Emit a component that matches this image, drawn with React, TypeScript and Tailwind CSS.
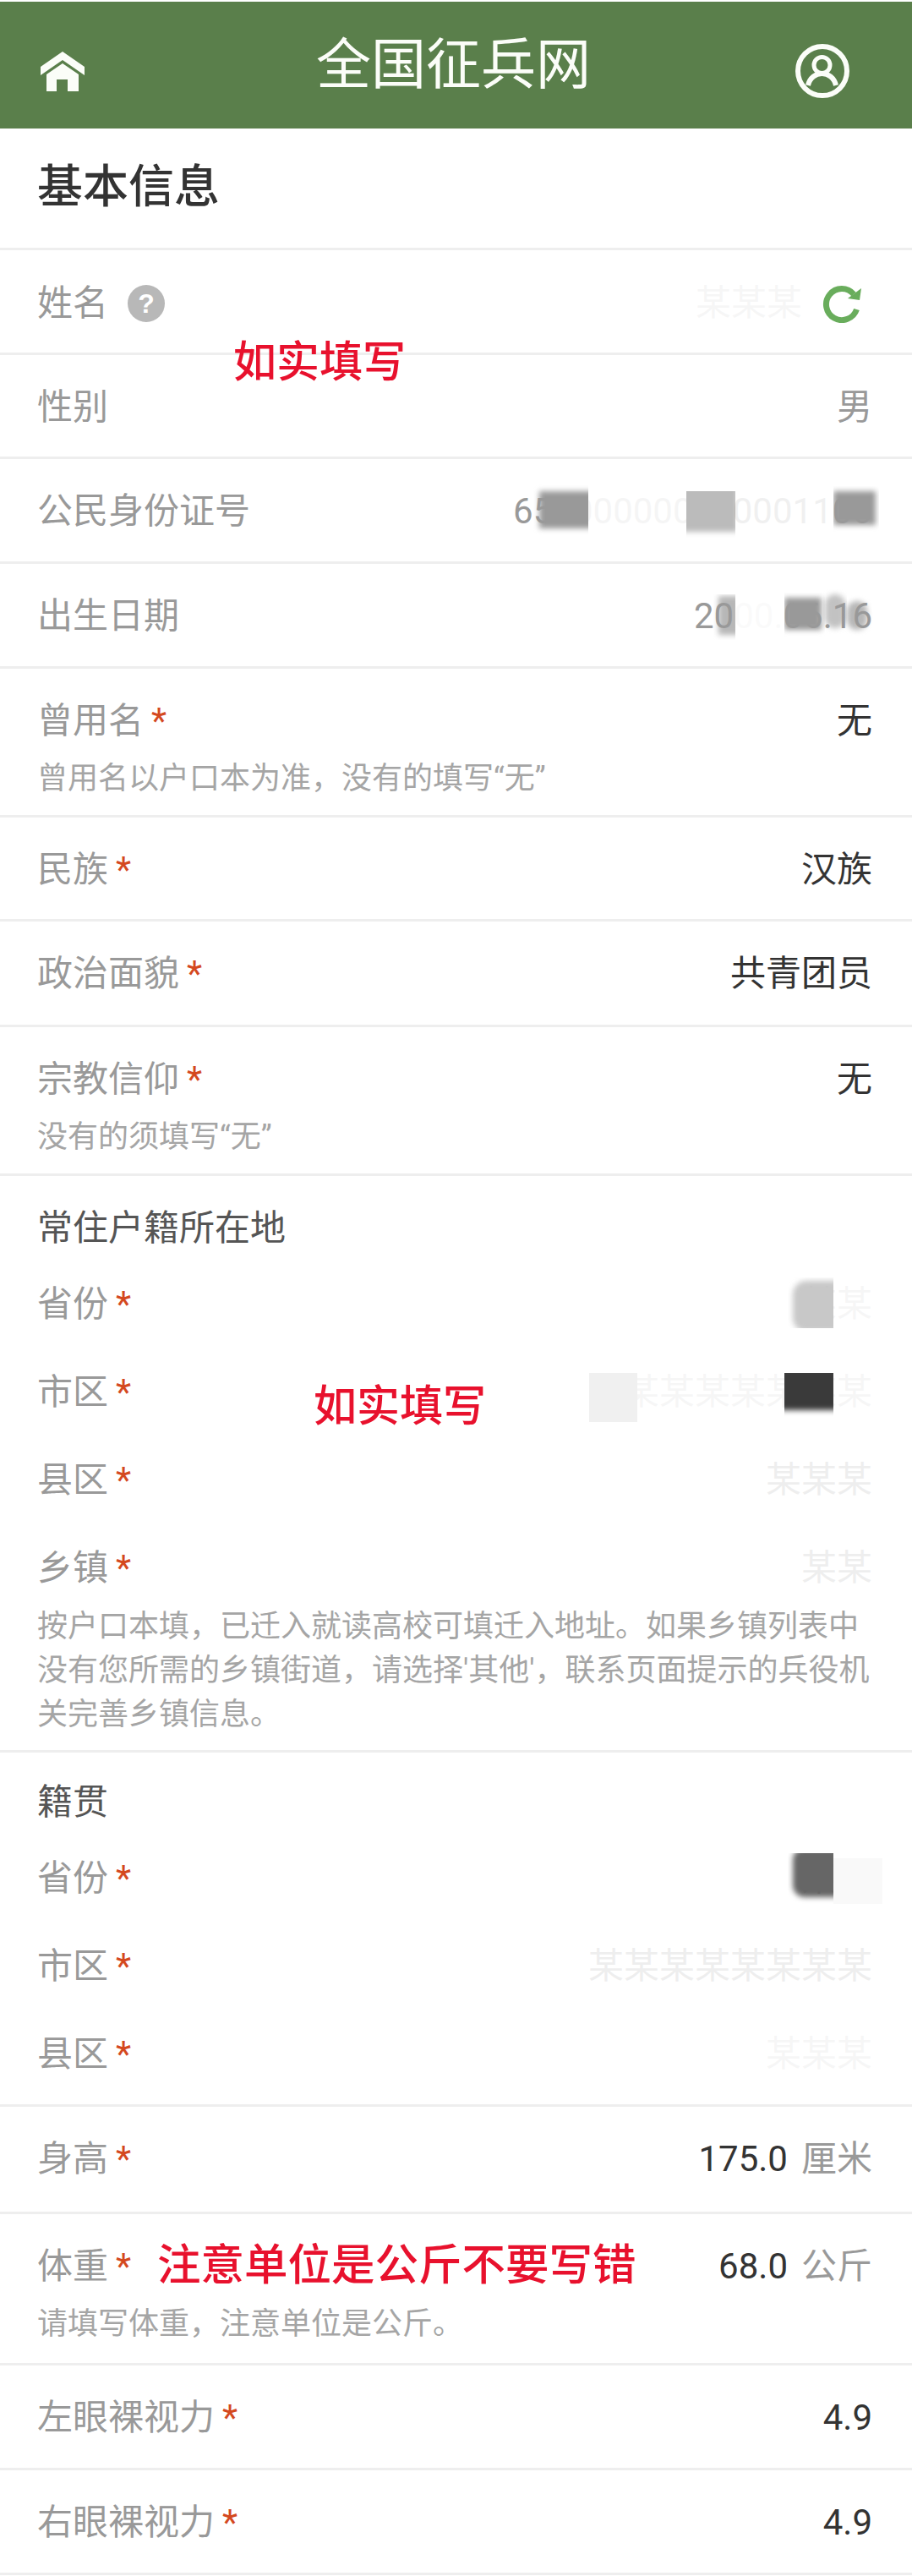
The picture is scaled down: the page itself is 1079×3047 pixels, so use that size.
import * as React from "react"

const FONT = "font-['Roboto','Noto_Sans_CJK_SC',sans-serif]"

function HomeIcon() {
  return (
    <svg width="52" height="47" viewBox="0 0 52 47" fill="#fbfdf8">
      <path d="M26 0L52 18V28L26 10L0 28V18Z" />
      <path d="M26 14L45 27V47H32V33H19V47H7V27Z" />
    </svg>
  )
}

function UserIcon() {
  return (
    <svg width="64" height="64" viewBox="0 0 64 64" fill="none" stroke="#fbfdf8" strokeWidth="6">
      <circle cx="32" cy="32" r="29" />
      <circle cx="31.5" cy="25" r="9.5" strokeWidth="5" />
      <path d="M15 49C17 40 24 35 31.5 35C39 35 46 40 48 49" />
    </svg>
  )
}

function RefreshIcon() {
  return (
    <svg width="46" height="46" viewBox="0 0 46 46" fill="none" className="mr-[13px]">
      <path d="M37 12A18.5 18.5 0 1 0 40.5 30" stroke="#69ad5c" strokeWidth="7" />
      <path d="M46 5L44 19L30 17Z" fill="#69ad5c" />
    </svg>
  )
}

function Star() {
  return <span className="ml-[9px] text-[#d4491f]">*</span>
}

// a blurred smear over masked text; the outer box clips it so one side stays sharp
function Blot({ box, fill }: { box: string; fill: string }) {
  return (
    <span className={`absolute overflow-hidden ${box}`}>
      <span className={`absolute blur-[3px] ${fill}`} />
    </span>
  )
}

function Veil({ className }: { className: string }) {
  return <span className={`absolute ${className}`} />
}

function Masked({ text, children }: { text: string; children: React.ReactNode }) {
  return (
    <span className="relative block whitespace-nowrap text-[#555]">
      {text}
      {children}
    </span>
  )
}

function Row({
  label,
  required = true,
  value,
  hint,
  height = "h-[124px]",
  children,
}: {
  label: React.ReactNode
  required?: boolean
  value: React.ReactNode
  hint?: string
  height?: string
  children?: React.ReactNode
}) {
  return (
    <div className={`relative border-b-[3px] border-[#eeeeee] pl-[44px] pr-[47px] ${height}`}>
      <div className="flex items-center justify-between pt-[40px] text-[42px] leading-[44px]">
        <div className="flex items-center text-[#999999]">
          <span>{label}</span>
          {required && <Star />}
        </div>
        {value}
      </div>
      {hint && <p className="mt-[22px] text-[36px] leading-[48px] text-[#a5a5a5]">{hint}</p>}
      {children}
    </div>
  )
}

function SubRow({ label, value }: { label: string; value: React.ReactNode }) {
  return (
    <div className="flex h-[104px] items-center justify-between text-[42px] leading-[44px]">
      <div className="flex items-center text-[#999999]">
        <span>{label}</span>
        <Star />
      </div>
      {value}
    </div>
  )
}

function Value({ text, unit, muted }: { text: string; unit?: string; muted?: boolean }) {
  return (
    <div className={muted ? "text-[#999999]" : "text-[#333333]"}>
      {text}
      {unit && <span className="ml-4 text-[#999999]">{unit}</span>}
    </div>
  )
}

export default function App() {
  return (
    <div className={`min-h-[3047px] bg-white pt-[2px] ${FONT}`}>
      <header className="flex h-[150px] items-center justify-between bg-[#5a7f4b] pl-[48px] pr-[74px]">
        <div className="mt-[14px]">
          <HomeIcon />
        </div>
        <h1 className="ml-[32px] text-[65px] leading-none text-[#fbfdf8]">全国征兵网</h1>
        <div className="mt-[14px]">
          <UserIcon />
        </div>
      </header>

      <div className="flex h-[144px] items-center border-b-[3px] border-[#eeeeee] px-[44px] pb-[2px]">
        <h2 className="text-[54px] font-medium leading-none text-[#333333]">基本信息</h2>
      </div>

      <Row
        label={
          <span className="flex items-center">
            姓名
            <span className="ml-[23px] flex h-[44px] w-[44px] items-center justify-center rounded-full bg-[#b8b8b8] font-['Liberation_Sans',sans-serif] text-[32px] font-bold text-white">
              ?
            </span>
          </span>
        }
        required={false}
        value={
          <div className="flex items-center">
            <div className="mr-[24px]">
              <Masked text="某某某">
                <Veil className="-inset-y-1 inset-x-0 bg-white/95" />
              </Masked>
            </div>
            <RefreshIcon />
          </div>
        }
      >
        <span className="absolute left-[276px] top-[107px] text-[51px] font-medium leading-none text-[#e8112d]">如实填写</span>
      </Row>
      <Row label="性别" required={false} height="h-[123px]" value={<Value text="男" muted />} />
      <Row
        label="公民身份证号"
        required={false}
        value={
          <span className="relative block whitespace-nowrap text-[#999999]">
            650000000000001100
            <Blot box="right-[336px] -top-[10px] h-[62px] w-[66px]" fill="left-[8px] top-[8px] -right-[8px] h-[44px] bg-[#999999]" />
            <Veil className="right-[220px] -top-1 h-[52px] w-[116px] bg-white/90" />
            <Blot box="right-[162px] -top-[2px] h-[56px] w-[58px]" fill="-left-[8px] -top-[8px] -right-[3px] h-[56px] bg-[#bbbbbb]" />
            <Veil className="right-[46px] -top-1 h-[52px] w-[116px] bg-white/85" />
            <Blot box="-right-[8px] -top-[8px] h-[58px] w-[54px]" fill="left-0 top-[6px] right-[4px] h-[40px] bg-[#999999]" />
          </span>
        }
      />
      <Row
        label="出生日期"
        required={false}
        value={
          <span className="relative block whitespace-nowrap text-[#999999]">
            2000.06.16
            <Blot box="right-[162px] -top-[4px] h-[54px] w-[26px]" fill="left-[6px] top-[2px] -right-[6px] h-[46px] bg-[#999999]/70" />
            <Veil className="right-[104px] -top-1 h-[52px] w-[58px] bg-white/95" />
            <Blot box="right-[56px] -top-[6px] h-[56px] w-[48px]" fill="left-0 top-[6px] right-[4px] h-[38px] bg-[#999999]" />
            <Blot box="right-[30px] -top-[10px] h-[60px] w-[28px]" fill="left-[2px] top-[6px] right-[2px] h-[40px] rounded-full bg-[#999999]/60" />
            <Blot box="right-0 -top-[4px] h-[56px] w-[36px]" fill="left-[6px] top-[8px] right-[6px] h-[34px] rounded-full bg-[#999999]/70" />
          </span>
        }
      />
      <Row label="曾用名" height="h-[176px]" value={<Value text="无" />} hint="曾用名以户口本为准，没有的填写“无”" />
      <Row label="民族" height="h-[123px]" value={<Value text="汉族" />} />
      <Row label="政治面貌" height="h-[125px]" value={<Value text="共青团员" />} />
      <Row label="宗教信仰" height="h-[176px]" value={<Value text="无" />} hint="没有的须填写“无”" />

      <section className="relative h-[682px] border-b-[3px] border-[#eeeeee] pl-[44px] pr-[47px] pt-[24px]">
        <h3 className="h-[76px] text-[42px] leading-[76px] text-[#555555]">常住户籍所在地</h3>
        <SubRow
          label="省份"
          value={
            <Masked text="某某">
              <Blot box="right-[46px] -top-[10px] h-[60px] w-[54px]" fill="left-[6px] top-[4px] -right-[6px] h-[60px] rounded-l-[16px] bg-[#c8c8c8]" />
              <Veil className="right-0 -top-1 h-[44px] w-[46px] bg-white/95" />
            </Masked>
          }
        />
        <SubRow
          label="市区"
          value={
            <Masked text="某某某某某某某某">
              <Veil className="-inset-y-1 inset-x-0 bg-white/95" />
              <Veil className="right-[278px] -top-[1px] h-[58px] w-[57px] bg-[#f0f0f0]" />
              <Blot box="right-[46px] -top-[1px] h-[52px] w-[58px]" fill="-left-[6px] -top-[6px] -right-[6px] h-[50px] bg-[#3a3a3a]" />
            </Masked>
          }
        />
        <SubRow
          label="县区"
          value={
            <Masked text="某某某">
              <Veil className="-inset-y-1 inset-x-0 bg-white/90" />
            </Masked>
          }
        />
        <SubRow
          label="乡镇"
          value={
            <Masked text="某某">
              <Veil className="-inset-y-1 inset-x-0 bg-white/90" />
            </Masked>
          }
        />
        <p className="-mt-[9px] text-[36px] leading-[52px] text-[#a5a5a5]">
          按户口本填，已迁入就读高校可填迁入地址。如果乡镇列表中没有您所需的乡镇街道，请选择'其他'，联系页面提示的兵役机关完善乡镇信息。
        </p>
        <span className="absolute left-[371px] top-[247px] text-[51px] font-medium leading-none text-[#e8112d]">如实填写</span>
      </section>

      <section className="h-[419px] border-b-[3px] border-[#eeeeee] pl-[44px] pr-[47px] pt-[21px]">
        <h3 className="h-[76px] text-[42px] leading-[76px] text-[#555555]">籍贯</h3>
        <SubRow
          label="省份"
          value={
            <Masked text="某某">
              <Blot box="right-[46px] -top-[8px] h-[64px] w-[54px]" fill="left-[6px] -top-[6px] -right-[6px] h-[58px] rounded-l-[14px] bg-[#666666]" />
              <Veil className="-right-[12px] -top-[2px] h-[54px] w-[58px] bg-[#f9f9f9]" />
            </Masked>
          }
        />
        <SubRow
          label="市区"
          value={
            <Masked text="某某某某某某某某">
              <Veil className="-inset-y-1 inset-x-0 bg-white/90" />
            </Masked>
          }
        />
        <SubRow
          label="县区"
          value={
            <Masked text="某某某">
              <Veil className="-inset-y-1 inset-x-0 bg-white/95" />
            </Masked>
          }
        />
      </section>

      <Row label="身高" height="h-[127px]" value={<Value text="175.0" unit="厘米" />} />
      <Row label="体重" height="h-[179px]" value={<Value text="68.0" unit="公斤" />} hint="请填写体重，注意单位是公斤。">
        <span className="absolute left-[186px] top-[35px] text-[51.5px] font-medium leading-none text-[#e8112d]">注意单位是公斤不要写错</span>
      </Row>
      <Row label="左眼裸视力" value={<Value text="4.9" />} />
      <Row label="右眼裸视力" value={<Value text="4.9" />} />
    </div>
  )
}
